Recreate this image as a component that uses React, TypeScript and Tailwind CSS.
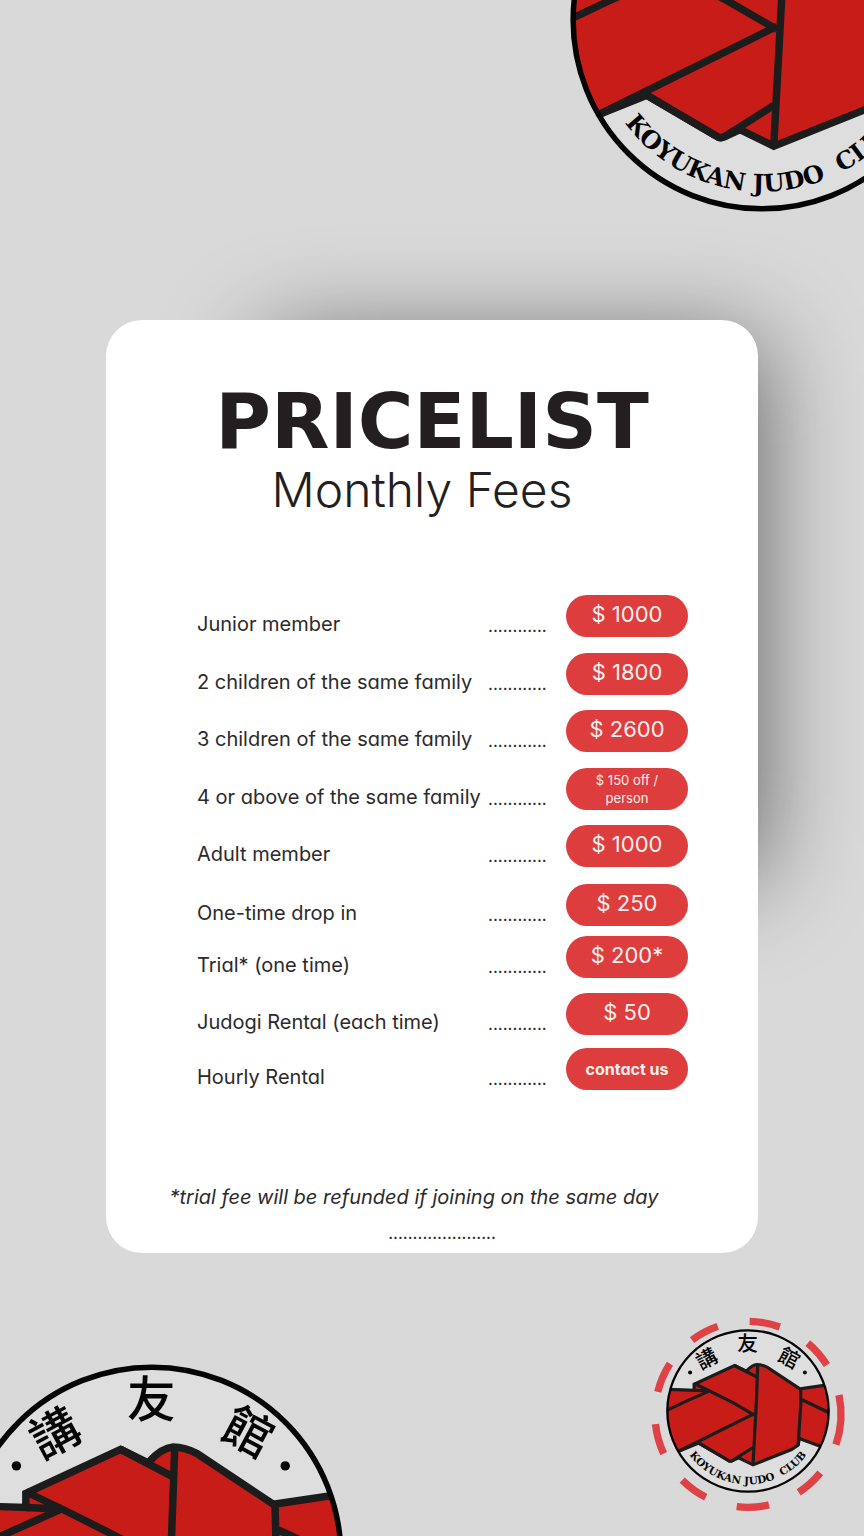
import React from "react";

type Fee = {
  label: string;
  price: string;
  row: string;
  kind?: "note" | "link";
};

const fees: Fee[] = [
  { label: "Junior member", price: "$ 1000", row: "h-[58px]" },
  { label: "2 children of the same family", price: "$ 1800", row: "h-[57px]" },
  { label: "3 children of the same family", price: "$ 2600", row: "h-[58px]" },
  { label: "4 or above of the same family", price: "$ 150 off / person", row: "h-[57px]", kind: "note" },
  { label: "Adult member", price: "$ 1000", row: "h-[59px]" },
  { label: "One-time drop in", price: "$ 250", row: "h-[52px]" },
  { label: "Trial* (one time)", price: "$ 200*", row: "h-[57px]" },
  { label: "Judogi Rental (each time)", price: "$ 50", row: "h-[55px]" },
  { label: "Hourly Rental", price: "contact us", row: "h-[42px]", kind: "link" },
];

type LogoProps = {
  id: string;
  className?: string;
  kanji?: boolean;
  name?: boolean;
};

function ClubLogo({ id, className, kanji = true, name = true }: LogoProps) {
  return (
    <svg viewBox="0 0 490 490" className={className} role="img" aria-label="Koyukan Judo Club">
      <defs>
        <clipPath id={`${id}-clip`}>
          <circle cx="245" cy="245" r="241" />
        </clipPath>
        <path id={`${id}-arc`} d="M 26 245 A 219 219 0 0 0 464 245" />
      </defs>
      <circle cx="245" cy="245" r="241" fill="#dedede" />
      <g clipPath={`url(#${id}-clip)`} stroke="#1c1c1c" strokeWidth="9.5" strokeLinejoin="miter">
        <path
          fill="#c71c17"
          d="M-10 180 L51 182 L84 183 L84 165 L205 109 L240 126 Q257 107 272 106 Q286 106 302 114 L400 179 L500 164 L500 368 L465 352 L398 327 L395 347 L375 360 L260 406 L217 385 L197 394 Q191 397 185 392 L98 341 L36 366 L-10 390 Z"
        />
        <path
          fill="none"
          d="M205 109 L272 144 M274 107 L270 219 L260 406 M84 163 L132 186 L200 220 L264 257 M84 183 L128 185 M132 184 L51 220 L-10 249 M264 253 L36 366 M98 341 L185 392 Q191 397 197 394 L260 354 M402 179 L403 219 L395 347 M403 210 L500 256"
        />
      </g>
      <circle cx="245" cy="245" r="241" fill="none" stroke="#050505" strokeWidth="7" />
      {kanji && (
        <g>
          <g fill="#050505" fontSize="62" textAnchor="middle" className="font-['Noto_Sans_CJK_TC',sans-serif] font-medium">
            <text transform="translate(121 88) rotate(-28)" y="23">講</text>
            <text transform="translate(244 44)" y="23">友</text>
            <text transform="translate(368 86) rotate(28)" y="23">館</text>
          </g>
          <circle cx="72" cy="130" r="6" fill="#050505" />
          <circle cx="415" cy="130" r="6" fill="#050505" />
        </g>
      )}
      {name && (
        <text
          fill="#050505"
          fontSize="31"
          textAnchor="middle"
          className="font-['DejaVu_Serif',serif] font-bold whitespace-pre"
        >
          <textPath href={`#${id}-arc`} startOffset="50%">
            {"KOYUKAN JUDO  CLUB"}
          </textPath>
        </text>
      )}
    </svg>
  );
}

const ringSegments: [number, number][] = [
  [-89, -70],
  [-50, -32],
  [-12, 19],
  [39, 57],
  [77, 97],
  [117, 135],
  [155, 174],
  [194, 213],
  [233, 251],
];

function arc([from, to]: [number, number]) {
  const point = (deg: number) => {
    const a = (deg * Math.PI) / 180;
    return `${(324 + 279 * Math.cos(a)).toFixed(1)} ${(313 + 279 * Math.sin(a)).toFixed(1)}`;
  };
  return `M ${point(from)} A 279 279 0 0 1 ${point(to)}`;
}

function DashedRing({ className }: { className?: string }) {
  return (
    <svg viewBox="0 0 660 630" className={className} aria-hidden="true">
      {ringSegments.map((s) => (
        <path key={s[0]} d={arc(s)} fill="none" stroke="#de4244" strokeWidth="22" />
      ))}
    </svg>
  );
}

function Price({ fee }: { fee: Fee }) {
  const pill =
    "flex h-[42px] w-[122px] items-center justify-center rounded-full bg-[#de3d3d] text-center text-[#fdf1ef]";
  if (fee.kind === "link") {
    return (
      <a href="#contact" className={`${pill} text-base font-bold`}>
        {fee.price}
      </a>
    );
  }
  if (fee.kind === "note") {
    return <span className={`${pill} px-6 text-[13px] leading-[18px]`}>{fee.price}</span>;
  }
  return <span className={`${pill} pb-1 text-[22px]`}>{fee.price}</span>;
}

export default function App() {
  return (
    <div className="flex min-h-screen flex-col overflow-hidden bg-[#d9d9d9] font-['Inter',sans-serif] text-[#2b2a2b] [font-feature-settings:'cv11']">
      <header className="flex h-80 justify-end">
        <ClubLogo id="top" kanji={false} className="-mt-[172px] -mr-[90px] size-[384px] shrink-0" />
      </header>

      <main className="relative mx-auto w-full max-w-[652px]">
        <div className="absolute top-5 -right-1 bottom-[375px] left-[160px] bg-black/55 blur-[50px]" />
        <section className="relative rounded-[36px] bg-white pt-14 pb-2">
          <h1 className="text-center font-['DejaVu_Sans',sans-serif] text-[76px] leading-[92px] font-bold text-[#231f20]">
            PRICELIST
          </h1>
          <p className="pr-5 text-center text-5xl leading-[44px] font-light text-[#231f20]">
            Monthly Fees
          </p>

          <table className="mt-[83px] ml-[91px] border-collapse text-left">
            <tbody>
              {fees.map((fee) => (
                <tr key={fee.label} className={fee.row}>
                  <th scope="row" className="w-[291px] p-0 pt-[15px] align-top text-xl leading-7 font-normal whitespace-nowrap">
                    {fee.label}
                  </th>
                  <td className="w-[78px] p-0 pt-[17px] align-top text-[17px] leading-7">............</td>
                  <td className="p-0 align-top">
                    <Price fee={fee} />
                  </td>
                </tr>
              ))}
            </tbody>
          </table>

          <p className="mt-[90px] pr-9 text-center text-xl leading-7 italic">
            *trial fee will be refunded if joining on the same day
          </p>
          <p className="mt-[10px] pl-5 text-center text-[17px] leading-6">......................</p>
        </section>
      </main>

      <footer className="flex h-[283px] items-start justify-between overflow-hidden">
        <ClubLogo id="left" name={false} className="mt-[111px] -ml-10 size-[384px] shrink-0" />
        <div className="relative mt-[57px] mr-1 h-[210px] w-[220px] shrink-0">
          <DashedRing className="size-full" />
          <ClubLogo id="badge" className="absolute top-[19px] left-[26px] size-[164px]" />
        </div>
      </footer>
    </div>
  );
}
